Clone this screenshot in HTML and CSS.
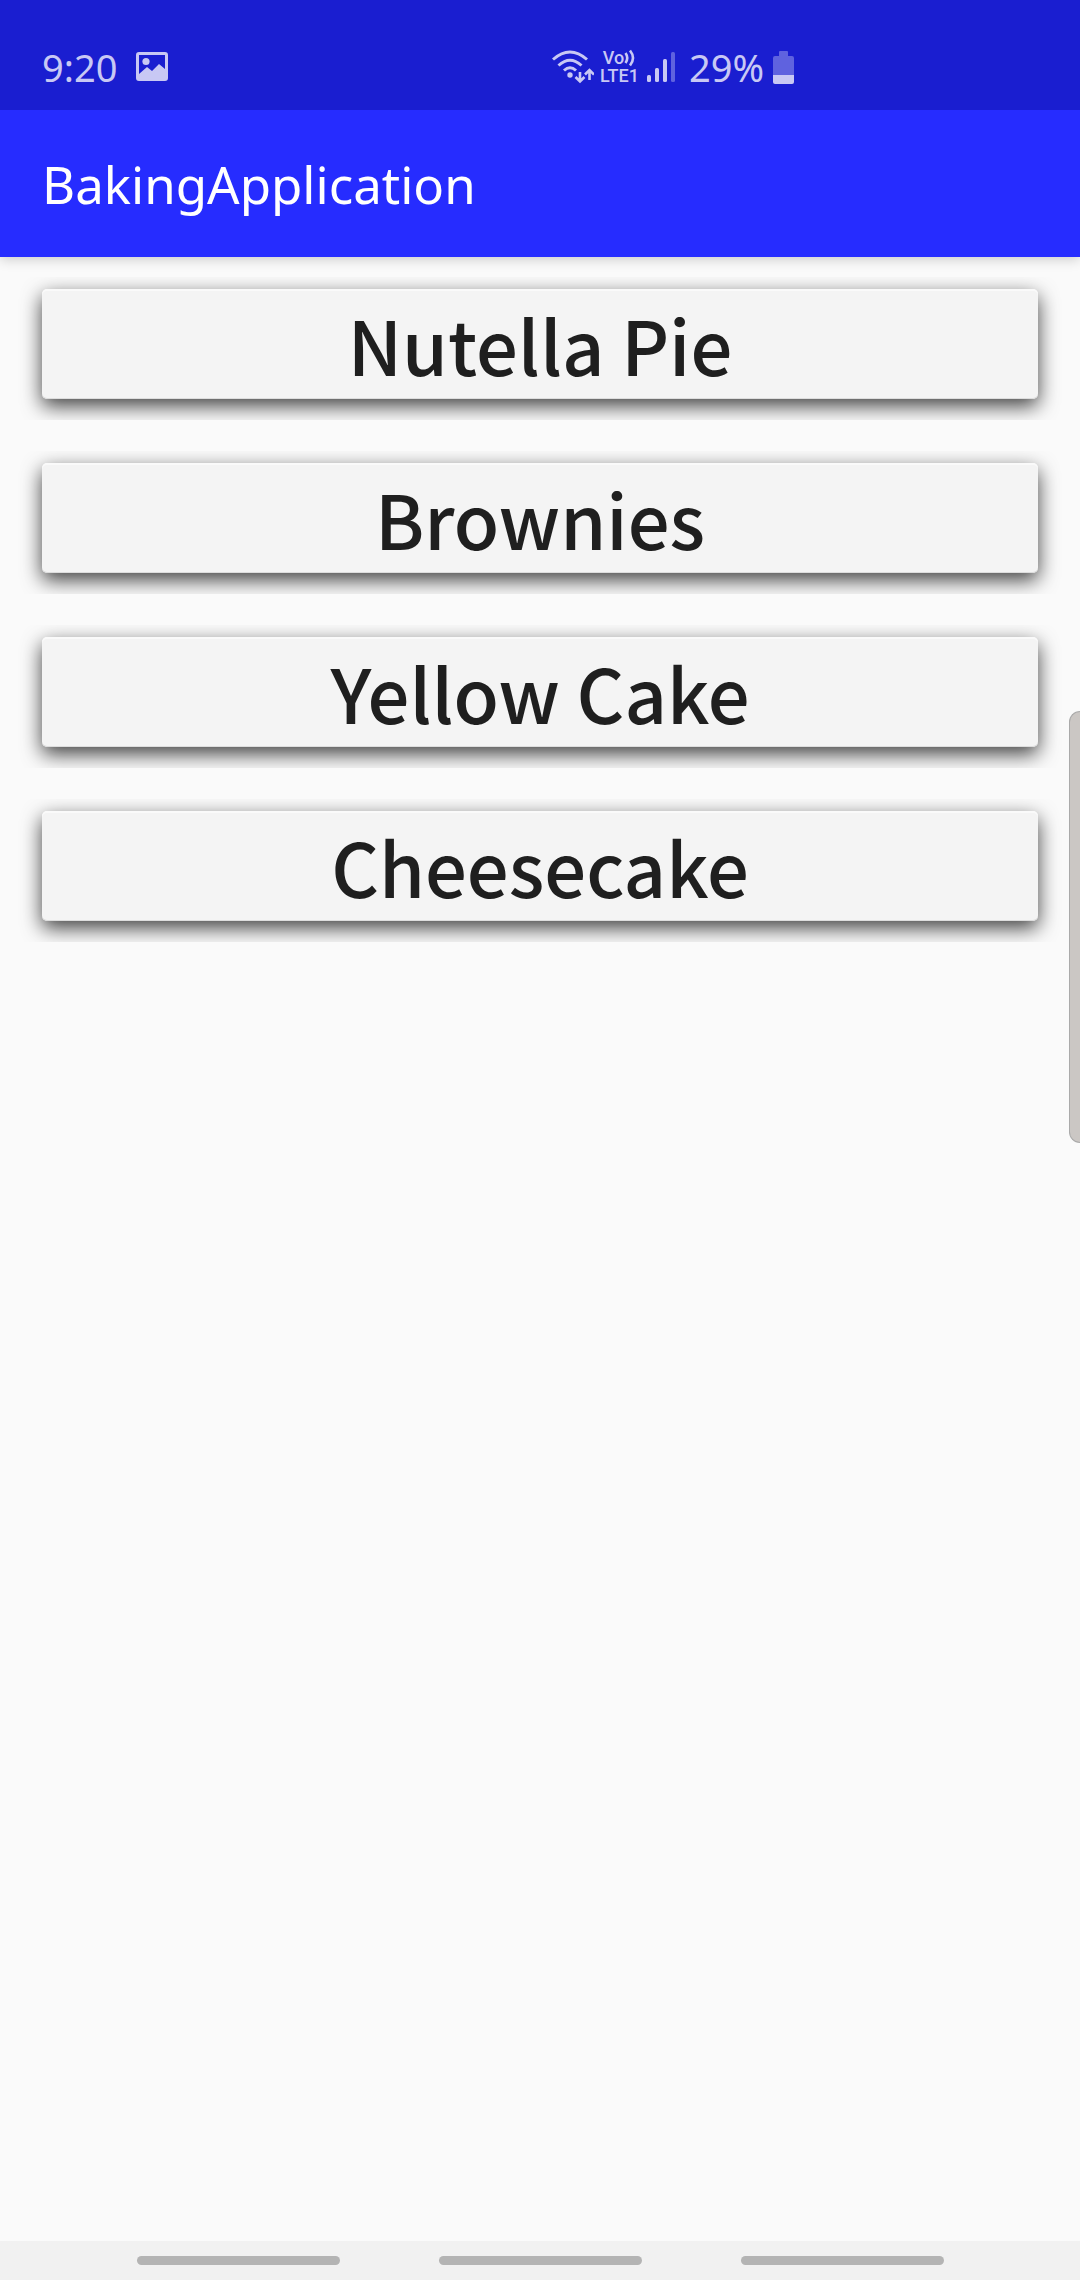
FILE: index.html
```html
<!DOCTYPE html>
<html lang="en">
<head>
<meta charset="utf-8">
<meta name="viewport" content="width=device-width, initial-scale=1">
<title>BakingApplication</title>
<link rel="stylesheet" href="styles.css">
</head>
<body>
<div class="status-bar">
  <div class="status-group">
    <span class="status-text">9:20</span>
    <svg class="icon-picture" width="32" height="30" viewBox="0 0 32 30" aria-hidden="true">
      <path fill-rule="evenodd" fill="currentColor" d="M3 0H29Q32 0 32 3V26Q32 29 29 29H3Q0 29 0 26V3Q0 0 3 0ZM3 3V22L11 15L16 19L23 12L29 17V3Z"/>
      <circle cx="10" cy="9.500" r="3.600" fill="currentColor"/>
    </svg>
  </div>
  <div class="status-group status-right">
    <svg class="icon-wifi" width="42" height="34" viewBox="0 0 42 34" aria-hidden="true">
      <g fill="none" stroke="currentColor" stroke-width="3">
        <path d="M1 9.500Q18 -5.500 35 9.500"/>
        <path d="M6.500 15.500Q18 5 29.500 15.500"/>
        <path d="M12 20.500Q18 15 24 20.500"/>
        <path d="M28 22V31M23.500 27L28 31.500L32.500 27M37.500 30V20M33 24.500L37.500 20L42 24.500" stroke-width="2.600"/>
      </g>
      <circle cx="18" cy="25" r="2.700" fill="currentColor"/>
    </svg>
    <span class="volte">
      <span class="volte-top">Vo<svg width="12" height="18" viewBox="0 0 12 18" aria-hidden="true"><path d="M1.500 4Q5 9 1.500 14M6 1.500Q12 9 6 16.500" fill="none" stroke="currentColor" stroke-width="2.600"/></svg></span>
      <span>LTE1</span>
    </span>
    <svg class="icon-signal" width="28" height="30" viewBox="0 0 28 30" aria-hidden="true">
      <g fill="currentColor">
        <rect x="0" y="23" width="4" height="7" rx="1.500"/>
        <rect x="8" y="16" width="4" height="14" rx="1.500"/>
        <rect x="16" y="7" width="4" height="23" rx="1.500"/>
        <rect x="24" y="0" width="4" height="30" rx="1.500" opacity=".4"/>
      </g>
    </svg>
    <span class="status-text">29%</span>
    <svg class="icon-battery" width="21" height="33" viewBox="0 0 21 33" aria-hidden="true">
      <path d="M6 1Q6 0 7 0H14Q15 0 15 1V5H19Q21 5 21 7V24H0V7Q0 5 2 5H6Z" fill="currentColor" opacity=".4"/>
      <path d="M0 24H21V31Q21 33 19 33H2Q0 33 0 31Z" fill="currentColor"/>
    </svg>
  </div>
</div>
<header class="app-bar"><h1 class="app-title">BakingApplication</h1></header>
<main class="content">
  <ul class="recipes">
    <li class="recipe"><button class="card" type="button">Nutella Pie</button></li>
    <li class="recipe"><button class="card" type="button">Brownies</button></li>
    <li class="recipe"><button class="card" type="button">Yellow Cake</button></li>
    <li class="recipe"><button class="card" type="button">Cheesecake</button></li>
  </ul>
</main>
<div class="edge-handle"></div>
<nav class="nav-bar" aria-label="System navigation">
  <button class="nav-hint" type="button" aria-label="Recents"></button>
  <button class="nav-hint" type="button" aria-label="Home"></button>
  <button class="nav-hint" type="button" aria-label="Back"></button>
</nav>
</body>
</html>
```
FILE: styles.css
```css
* { box-sizing: border-box; }
body {
  margin: 0;
  min-height: 100vh;
  display: flex;
  flex-direction: column;
  background: #fafafa;
  color: #1f1f1f;
  font-family: "Noto Sans", sans-serif;
}
.status-bar {
  position: relative;
  z-index: 1;
  display: grid;
  grid-template-columns: 1fr 1fr;
  height: 110px;
  padding: 24px 42px 0;
  background: #1a1ed0;
  color: #c8c8f4;
}
.status-group { display: flex; align-items: center; }
.status-text { font-size: 38px; line-height: 48px; }
.icon-picture { margin-left: 19px; }
.status-right { padding-left: 12px; }
.icon-wifi { margin-right: 6px; }
.volte {
  display: flex;
  flex-direction: column;
  align-items: center;
  font-family: Roboto, sans-serif;
  font-size: 18px;
  font-weight: 500;
  line-height: 18px;
}
.volte-top { display: flex; align-items: center; }
.icon-signal { margin: 0 14px 0 8px; }
.icon-battery { margin-left: 9px; }
.app-bar {
  position: relative;
  display: flex;
  align-items: center;
  height: 147px;
  padding: 0 42px;
  background: #262cff;
  color: #fff;
  box-shadow: 0 2px 12px rgba(0, 0, 0, .2);
}
.app-title { margin: 0; font-size: 51px; font-weight: 400; line-height: 72px; }
.content { flex: 1; padding-top: 20px; }
.recipes {
  display: flex;
  flex-direction: column;
  gap: 31px;
  margin: 0;
  padding: 0;
  list-style: none;
}
.recipe { padding: 12px 42px 21px; overflow: hidden; }
.card {
  display: block;
  width: 100%;
  height: 110px;
  padding: 0;
  border: 0;
  border-radius: 5px;
  background: #f4f4f4;
  box-shadow: 0 7px 20px rgba(0, 0, 0, .75), inset 0 2px #fafafa, inset 0 -1px #ddd;
  color: inherit;
  font-family: "Noto Sans CJK KR", "Noto Sans", sans-serif;
  font-size: 74px;
  font-weight: 500;
  line-height: 110px;
}
.edge-handle {
  position: fixed;
  top: 711px;
  right: 0;
  width: 11px;
  height: 432px;
  border: 1px solid #aaa;
  border-right: 0;
  border-radius: 11px 0 0 11px;
  background: #cbc7c4;
}
.nav-bar {
  display: flex;
  justify-content: center;
  align-items: center;
  gap: 99px;
  height: 39px;
  background: #f1f1f1;
}
.nav-hint {
  width: 203px;
  height: 9px;
  padding: 0;
  border: 0;
  border-radius: 5px;
  background: #b4b4b4;
}
```
